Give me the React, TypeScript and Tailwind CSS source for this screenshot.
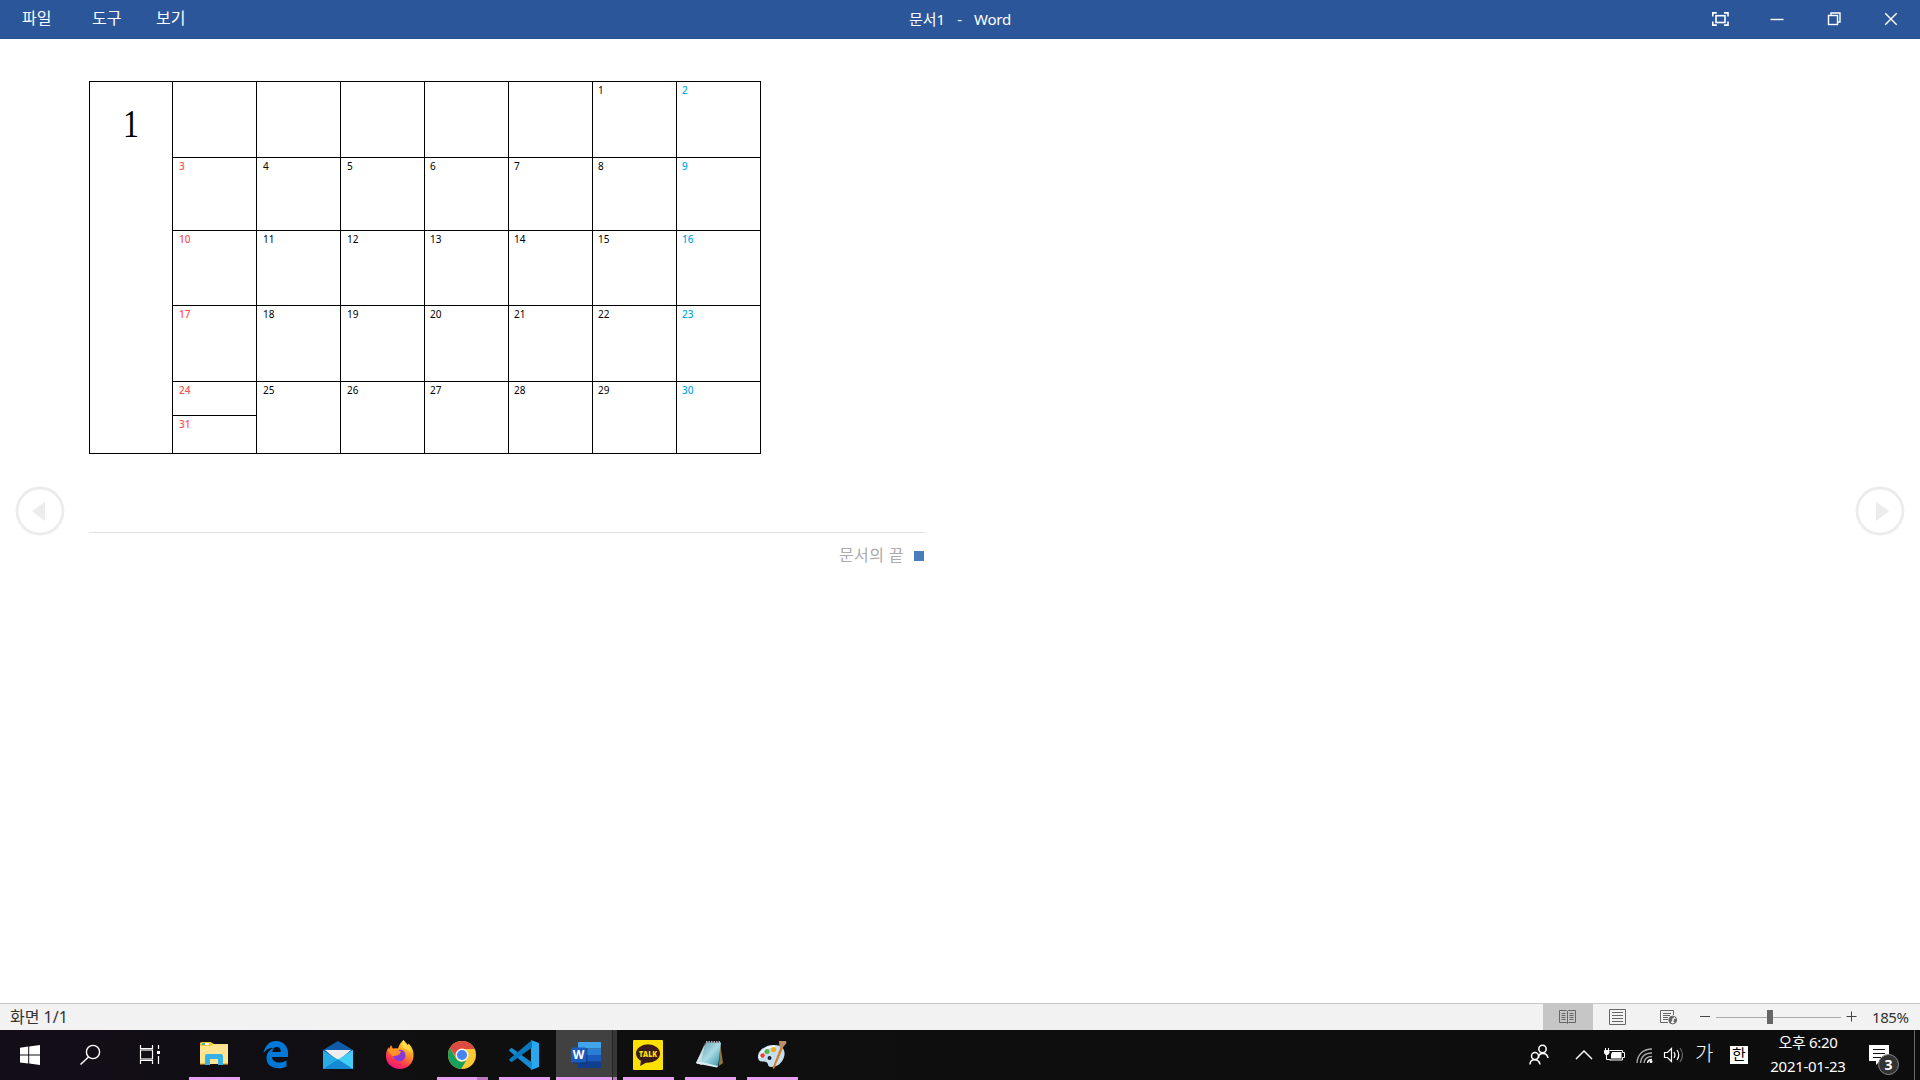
import React from "react";

const UI = "font-['Noto_Sans','Noto_Sans_CJK_KR',sans-serif]";

type Day = number | null;

const weeks: { h: string; days: Day[] }[] = [
  { h: "h-[75px]", days: [null, null, null, null, null, 1, 2] },
  { h: "h-[72px]", days: [3, 4, 5, 6, 7, 8, 9] },
  { h: "h-[74px]", days: [10, 11, 12, 13, 14, 15, 16] },
  { h: "h-[75px]", days: [17, 18, 19, 20, 21, 22, 23] },
  { h: "h-[71px]", days: [24, 25, 26, 27, 28, 29, 30] },
];

function dayColor(col: number) {
  if (col === 0) return "text-[#ff5050] pl-[6px] font-medium";
  if (col === 6) return "text-[#00a8ee] pl-[5px] font-medium";
  return col < 3 ? "text-black pl-[6px]" : "text-black pl-[5px]";
}

function DayCell({ day, col }: { day: Day; col: number }) {
  return (
    <div className={`h-full w-[83px] bg-white pt-px text-[10px] leading-[14px] ${dayColor(col)}`}>
      {day}
    </div>
  );
}

function Calendar() {
  return (
    <div className="flex w-[672px] gap-px bg-black p-px">
      <div className="w-[82px] bg-white pt-[19px] pl-[33px] font-['Liberation_Serif',serif] text-[40px] leading-[46px]">
        <span className="inline-block origin-left scale-x-[0.8]">1</span>
      </div>
      <div className="flex flex-col gap-px">
        {weeks.map((w, i) => (
          <div key={i} className={`flex gap-px ${w.h}`}>
            {w.days.map((d, c) =>
              d === 24 ? (
                <div key={c} className="flex w-[83px] flex-col gap-px">
                  <div className="h-[33px]"><DayCell day={24} col={0} /></div>
                  <div className="h-[37px]"><DayCell day={31} col={0} /></div>
                </div>
              ) : (
                <DayCell key={c} day={d} col={c} />
              )
            )}
          </div>
        ))}
      </div>
    </div>
  );
}

function TitleBar() {
  return (
    <header className="flex h-[39px] border-b border-[#27508f] bg-[#2b579a] text-white">
      <nav className="flex w-[640px] pt-[7px] pl-[22px] text-[16px] leading-[22px]">
        <span className="w-[70px]">파일</span>
        <span className="w-[64px]">도구</span>
        <span>보기</span>
      </nav>
      <div className="flex flex-1 justify-center pt-[9px] text-[15px] leading-[21px]">
        <div className="flex w-[102px] justify-between">
          <span>문서1</span>
          <span>-</span>
          <span className="tracking-[-0.2px]">Word</span>
        </div>
      </div>
      <svg className="mr-[12px] ml-[428px]" width="200" height="38" fill="none" stroke="#fff" strokeWidth="1.4">
        <path d="M4.8 16.500v-3.600h4M16 12.900h4v3.600M20 21.500v3.600h-4M8.800 25.100h-4v-3.600" strokeWidth="1.600" />
        <rect x="8" y="15.700" width="9" height="6.800" strokeWidth="1.600" />
        <path d="M62.500 19.500h13" />
        <path d="M123 15.500v-2.500h9v9h-2.500" />
        <rect x="120.500" y="15.500" width="9" height="9" />
        <path d="M177.200 13.300l11.500 11.500M188.700 13.300l-11.500 11.500" />
      </svg>
    </header>
  );
}

function PageArrow({ next = false }: { next?: boolean }) {
  return (
    <svg width="50" height="50" viewBox="0 0 50 50">
      <circle cx="25" cy="25" r="23" fill="#fff" stroke="#ececec" strokeWidth="2.800" />
      <path d={next ? "M21 15.500v19.500l13-9.700z" : "M30 15.500v19.500l-13-9.700z"} fill="#ececec" />
    </svg>
  );
}

function StatusBar() {
  return (
    <div className="flex h-[27px] border-t border-[#c6c6c6] bg-[#f2f2f2] text-[#333]">
      <div className="flex-1 pt-[2px] pl-[10px] text-[16px] leading-[22px]">화면 1/1</div>
      <div className="flex h-[26px] w-[50px] items-center justify-center bg-[#c6c6c6]">
        <svg width="18" height="16" viewBox="0 0 18 16" fill="none" stroke="#666">
          <path d="M8.500 2.500L7.500 1.500H.5v12h7l1 1 1-1h7v-12h-7zM8.500 2v12" />
          <path d="M2.500 4.500h4M2.500 6.500h4M2.500 8.500h4M2.500 10.500h4M10.500 4.500h4M10.500 6.500h4M10.500 8.500h4M10.500 10.500h4" />
        </svg>
      </div>
      <div className="flex w-[50px] items-center justify-center">
        <svg width="18" height="16" viewBox="0 0 18 16" fill="none" stroke="#666">
          <path d="M.5.5h16v15H.5zM3 3.500h11M3 6.500h11M3 9.500h11M3 12.500h11" />
        </svg>
      </div>
      <div className="flex w-[52px] items-center justify-center">
        <svg width="18" height="16" viewBox="0 0 18 16" fill="none" stroke="#666">
          <path d="M8 13.500H.5V1.500h13V6M3 4.500h8M3 6.500h7M3 8.500h5M3 10.500h5" />
          <circle cx="12.700" cy="11" r="3.900" fill="#f2f2f2" />
          <path d="M9 10.500l1-2.500 3-.8 1 1.300-2 1.500.3 1.500-1 1-.3 2-2-1.500zM14 10l2.500-.500v2.500l-1.500 2-1.500-1.500z" fill="#666" stroke="none" />
        </svg>
      </div>
      <svg width="169" height="26" fill="none" stroke="#444">
        <path d="M5 12.500h10M151.500 12.500h10M156.500 7.500v10" />
        <path d="M21 13.500h125" stroke="#aaa" />
        <rect x="72" y="6" width="6" height="14" fill="#666" stroke="none" />
      </svg>
      <div className="w-[56px] pt-[3px] pl-[8px] text-[15px] leading-[21px] tracking-[-0.400px]">185%</div>
    </div>
  );
}

function FileExplorerIcon() {
  return (
    <svg width="30" height="30" viewBox="0 0 30 30">
      <path d="M1 3h12l2 1h14v20H1z" fill="#ffe08a" />
      <path d="M1 3.500q0-1.500 1.500-1.500H12l2 2-2 2H1z" fill="#f8c22c" />
      <path d="M3 3h7v2H3z" fill="#fff" /><path d="M3 3h3v2H3z" fill="#4aba9b" />
      <path d="M1 6h28v18H1z" fill="#ffe592" />
      <path d="M6 25V16q0-2 2-2h14q2 0 2 2v9h-5v-6h-8v6z" fill="#35b1e6" />
      <path d="M1 23h5v1.500H1zM24 23h5v1.500h-5z" fill="#edbd48" />
    </svg>
  );
}

function EdgeIcon() {
  return (
    <svg width="30" height="30" viewBox="0 0 30 30">
      <path d="M2.500 13C4 5.500 8.500 1 15 1c8 0 12 6 12 12.500V17H11c.3 4 3.800 5.500 7.500 5.500 3 0 5-.8 7-2v6c-2.200 1.200-5 1.800-8 1.800C10 28.300 5.500 24 5.500 18c0-4.800 2.700-8 7-10C7.800 7.800 4.800 9.700 2.500 13zM11.300 12h8.500c0-3.300-1.400-5-4-5-2.700 0-4.200 2-4.500 5z" fill="#0078d7" />
    </svg>
  );
}

function MailIcon() {
  return (
    <svg width="30" height="30" viewBox="0 0 30 30">
      <path d="M0 10L15 1l15 9v6H0z" fill="#0f5ca8" />
      <path d="M2 10h26L15 21z" fill="#f1efed" />
      <path d="M0 10.500l15 9L30 10v19H0z" fill="#27ade4" />
      <path d="M3 10h24l-10 9-3-.5z" fill="#f1efed" />
      <path d="M30 10v19L15 19.500z" fill="#42cdf5" />
      <path d="M15 19.500L30 29H0z" fill="#1789d2" />
    </svg>
  );
}

function FirefoxIcon() {
  return (
    <svg width="30" height="30" viewBox="0 0 30 30">
      <defs>
        <linearGradient id="ff" x1=".8" y1="0" x2=".3" y2="1">
          <stop offset="0" stopColor="#fff44f" /><stop offset=".4" stopColor="#ff9a20" />
          <stop offset=".75" stopColor="#ff3750" /><stop offset="1" stopColor="#eb1080" />
        </linearGradient>
      </defs>
      <path d="M18.500 0c2 2 3 4 4.500 5l.5-1.500c4 4 5.500 8 5 13C28 24 22 29 15 29 7 29 1 23.500 1 16c0-4 1-7 3-9v2l2-4 2 4c2-1 4-1 5-.5C14 5 16 2 18.500 0z" fill="url(#ff)" />
      <path d="M12 11c4-3 9 0 8.500 5-.4 4-4 6-7.500 5-3-.8-4.500-3-4.500-5.500 1 1 2.500 1 4 .3l3-2z" fill="#8539d9" />
      <path d="M3 10c3-2 7-2 10 0l3 1.500c-1 2-3 2-4.500 3L9 16c-2 0-4-2-6-6z" fill="#ff9724" />
      <path d="M18.500 0c2 4 7 6 7 13-1-2-3-4-5-4-4-1-4-5-2-9z" fill="#ffde43" />
    </svg>
  );
}

function ChromeIcon() {
  return (
    <svg width="30" height="30" viewBox="0 0 30 30">
      <circle cx="15" cy="15" r="14" fill="#fcc934" />
      <path d="M2.900 8A14 14 0 0 1 27.600 9H15a6.300 6.300 0 0 0-6 8z" fill="#db4b3f" />
      <path d="M2.900 8A14 14 0 0 0 14.200 29l6.200-10.500a6.300 6.300 0 0 1-11 .2z" fill="#17a05c" />
      <circle cx="15" cy="15" r="6.500" fill="#f3f3f3" />
      <circle cx="15" cy="15" r="5" fill="#4585f2" />
    </svg>
  );
}

function CodeIcon() {
  return (
    <svg width="30" height="30" viewBox="0 0 30 30">
      <path d="M22 0l8 3v24l-8 3z" fill="#28a8ef" />
      <path d="M0 10l2.500-2.300L23 22.500V30L1 11.500q-.8-.7-1-1.500z" fill="#168ad2" />
      <path d="M0 20l2.500 2.300L23 7.500V0L1 18.500q-.8.700-1 1.500z" fill="#0779bf" />
    </svg>
  );
}

function WordIcon() {
  return (
    <svg width="30" height="30" viewBox="0 0 30 30">
      <path d="M7 3q0-1 1-1h22v6.500H7z" fill="#41a5ee" />
      <path d="M7 8.500h23V15H7z" fill="#2b7cd3" />
      <path d="M7 15h23v6.500H7z" fill="#185abd" />
      <path d="M7 21.500h23V28H8q-1 0-1-1z" fill="#103f91" />
      <rect x="2" y="8" width="14.500" height="16" fill="#0c326e" opacity=".5" />
      <rect x="0" y="7.500" width="15" height="15" rx="1" fill="#1b5bbe" />
      <text x="7.500" y="19.200" fill="#fff" fontSize="12" fontWeight="700" textAnchor="middle" fontFamily="Open Sans, sans-serif">W</text>
    </svg>
  );
}

function TalkIcon() {
  return (
    <svg width="30" height="30" viewBox="0 0 30 30">
      <rect width="30" height="30" rx="1" fill="#ffe100" />
      <ellipse cx="15" cy="13.500" rx="12" ry="9.200" fill="#391b1b" />
      <path d="M8 20l-.8 6 7-4z" fill="#391b1b" />
      <text x="15" y="16.500" fill="#ffe100" fontSize="8.500" fontWeight="800" textAnchor="middle" textLength="18" lengthAdjust="spacingAndGlyphs" fontFamily="Open Sans, sans-serif">TALK</text>
    </svg>
  );
}

function NotepadIcon() {
  return (
    <svg width="30" height="30" viewBox="0 0 30 30">
      <defs>
        <linearGradient id="np" x1="0" y1="0" x2="1" y2="1">
          <stop offset="0" stopColor="#5d97a8" /><stop offset=".5" stopColor="#a9dce5" /><stop offset="1" stopColor="#2b8ba4" />
        </linearGradient>
      </defs>
      <path d="M25 3l3 20-4 3z" fill="#927547" />
      <path d="M11 3L1 23l6 2z" fill="#e4eeee" />
      <path d="M11 2.500h15L23 27 4 22z" fill="url(#np)" />
      <path d="M10 3L1 23l5 1z" fill="#cfe3e6" opacity=".7" />
      <path d="M2 22l5 0 16 4-1 1.500L1.500 23.500z" fill="#d9eef2" />
      <path d="M11 2h15" stroke="#aaa" strokeWidth="2" strokeDasharray="1.500 1" />
    </svg>
  );
}

function PaintIcon() {
  return (
    <svg width="30" height="30" viewBox="0 0 30 30">
      <path d="M1 18C0 10 10 4 18 5c8 0 11 6 9 12-2 7-8 10-13 10-4 0-2-4-5-5-3-1-7 1-8-4z" fill="#c6dff0" />
      <path d="M3 18C3 11 11 6 18 7" fill="none" stroke="#f3fafe" strokeWidth="2" />
      <circle cx="5.500" cy="15.500" r="2.200" fill="#df4638" />
      <circle cx="10" cy="11.500" r="2.500" fill="#51b948" />
      <circle cx="16.500" cy="9.500" r="2.600" fill="#f7a91c" />
      <circle cx="12.500" cy="18" r="2" fill="#17242d" />
      <path d="M24 6l2 2-9 21-1.500-1z" fill="#d87c22" />
      <path d="M22 1l7 0 .5 2-4 5-3-1z" fill="#bd8f68" />
    </svg>
  );
}

const apps: { name: string; icon: React.ReactNode; state: "idle" | "open" | "multi" | "active" }[] = [
  { name: "explorer", icon: <FileExplorerIcon />, state: "open" },
  { name: "edge", icon: <EdgeIcon />, state: "idle" },
  { name: "mail", icon: <MailIcon />, state: "idle" },
  { name: "firefox", icon: <FirefoxIcon />, state: "idle" },
  { name: "chrome", icon: <ChromeIcon />, state: "multi" },
  { name: "code", icon: <CodeIcon />, state: "open" },
  { name: "word", icon: <WordIcon />, state: "active" },
  { name: "talk", icon: <TalkIcon />, state: "open" },
  { name: "notepad", icon: <NotepadIcon />, state: "open" },
  { name: "paint", icon: <PaintIcon />, state: "open" },
];

function AppButton({ icon, state }: { icon: React.ReactNode; state: string }) {
  if (state === "active") {
    return (
      <div className="flex h-[50px] w-[62px] pl-px">
        <div className="flex w-[56px] flex-col items-end bg-[#414141]">
          <div className="flex h-[47px] items-end pr-[11px] pb-[7px]">{icon}</div>
          <div className="h-[3px] w-full bg-[#e6a0ef]" />
        </div>
        <div className="flex w-[5px] flex-col justify-end border-l border-[#222] bg-[#383838]">
          <div className="h-[3px] bg-[#b57bbc]" />
        </div>
      </div>
    );
  }
  return (
    <div className="flex h-[50px] w-[62px] flex-col">
      <div className="flex h-[47px] items-end pb-[7px] pl-[16px]">{icon}</div>
      {state !== "idle" && (
        <div className="ml-[6px] flex h-[3px] w-[51px] bg-[#e6a0ef]">
          {state === "multi" && <div className="ml-[40px] w-[11px] bg-[#b57bbc]" />}
        </div>
      )}
    </div>
  );
}

function SystemTray() {
  return (
    <>
      <svg width="168" height="50" fill="none" stroke="#fff" strokeWidth="1.500">
        {/* people */}
        <circle cx="15.500" cy="19" r="3.700" />
        <path d="M11.500 28c0-6 8.500-6 9.500 0" />
        <circle cx="8" cy="26" r="3.500" />
        <path d="M3 34.500c0-6.500 9-6.500 10 0" />
        {/* hidden icons */}
        <path d="M49 29l8-8 8 8" />
        {/* battery */}
        <path d="M82.500 20.500h13v2h2v5h-2v2.500h-13" strokeWidth="1" />
        <path d="M85 22h9.500v6.500H84v-4z" fill="#fff" stroke="none" />
        <path d="M77.500 20.500h4.500v2.500l-1 1.500h-2.500l-1-1.500z" fill="#fff" strokeWidth="1" />
        <path d="M78.500 18v2M81.500 18v2M79.500 25v4.500h4" strokeWidth="1" />
        {/* wifi */}
        <g strokeWidth="1.300">
          <path d="M110 33c.5-8.500 6-14 15-14M113.500 33c.5-6 4.500-10 11.500-10M117 33c.5-4 3-6.500 8-6.500" stroke="#aaa" />
          <path d="M120.500 33c.3-2.500 1.800-3.500 4.500-3.500" />
          <circle cx="124" cy="31.500" r="1.500" fill="#fff" stroke="none" />
        </g>
        {/* volume */}
        <g strokeWidth="1.200">
          <path d="M137.500 22.500h3l4-4v13l-4-4h-3z" />
          <path d="M147 22q2 3 0 6M150 20q3.500 5 0 10" />
          <path d="M153 18q5 7 0 14" stroke="#666" />
        </g>
      </svg>
      <div className="w-[33px] pt-[10px] text-[20px] leading-[28px] font-light">가</div>
      <div className="mt-[16px] mr-[20px] ml-[2px] h-[18px] w-[18px] bg-white text-center text-[15px] leading-[16px] text-black">한</div>
      <div className="w-[80px] pt-[2px] text-center text-[15px] leading-[23px] tracking-[-0.300px] whitespace-nowrap">
        <div className="-mt-px mb-px">오후 6:20</div>
        <div>2021-01-23</div>
      </div>
      <svg className="ml-[20px]" width="46" height="50">
        <path d="M1 15h20v16h-9l-4 4v-4H1z" fill="#fff" />
        <path d="M5 19.500h12M5 23.500h12M5 27.500h8" stroke="#111" strokeWidth="1.200" />
        <circle cx="20.500" cy="34.500" r="10" fill="#333" stroke="#888" />
        <text x="20.500" y="39.500" fill="#fff" fontSize="14" fontWeight="700" textAnchor="middle" fontFamily="Noto Sans, sans-serif">3</text>
      </svg>
      <div className="w-[6px] border-l border-[#666]" />
    </>
  );
}

function Taskbar() {
  return (
    <footer className="flex h-[50px] bg-linear-to-r from-[#130d18] via-[#0f0f0f] via-25% to-[#0d0d0d] text-white">
      <svg width="183" height="50" fill="none" stroke="#fff" strokeWidth="1.400">
        <path d="M20 17.700l8.200-1.100v8H20zM29.200 16.500L40 15v9.600H29.200zM20 25.600h8.200v8L20 32.500zM29.200 25.600H40V35l-10.800-1.400z" fill="#fff" stroke="none" />
        <circle cx="93" cy="22" r="6.600" />
        <path d="M88.500 27L80.500 34.500" />
        <path d="M140.500 15v3.500h12V15M140.500 34v-3.500h12V34M158.500 15v4M158.500 26v8" strokeWidth="1.200" />
        <rect x="140.500" y="20" width="12" height="9" strokeWidth="1.200" />
        <rect x="157" y="21" width="3" height="3" fill="#fff" stroke="none" />
      </svg>
      {apps.map((a) => <AppButton key={a.name} icon={a.icon} state={a.state} />)}
      <div className="flex-1" />
      <SystemTray />
    </footer>
  );
}

export default function App() {
  return (
    <div className={`flex h-[1080px] w-[1920px] flex-col overflow-hidden bg-white ${UI}`}>
      <TitleBar />
      <main className="flex flex-1">
        <div className="w-[89px] pt-[447px] pl-[15px]"><PageArrow /></div>
        <article className="w-[836px] pt-[42px]">
          <Calendar />
          <div className="mt-[78px] flex items-start justify-end gap-[10px] border-t border-[#e1e1e1] pt-[11px] text-[16px] leading-[22px] text-[#ababab]">
            <span className="tracking-[0.4px]">문서의 끝</span>
            <span className="mt-[7px] mr-px h-[10px] w-[10px] bg-[#4a7ebb]" />
          </div>
        </article>
        <div className="flex-1" />
        <div className="pt-[447px] pr-[15px]"><PageArrow next /></div>
      </main>
      <StatusBar />
      <Taskbar />
    </div>
  );
}
